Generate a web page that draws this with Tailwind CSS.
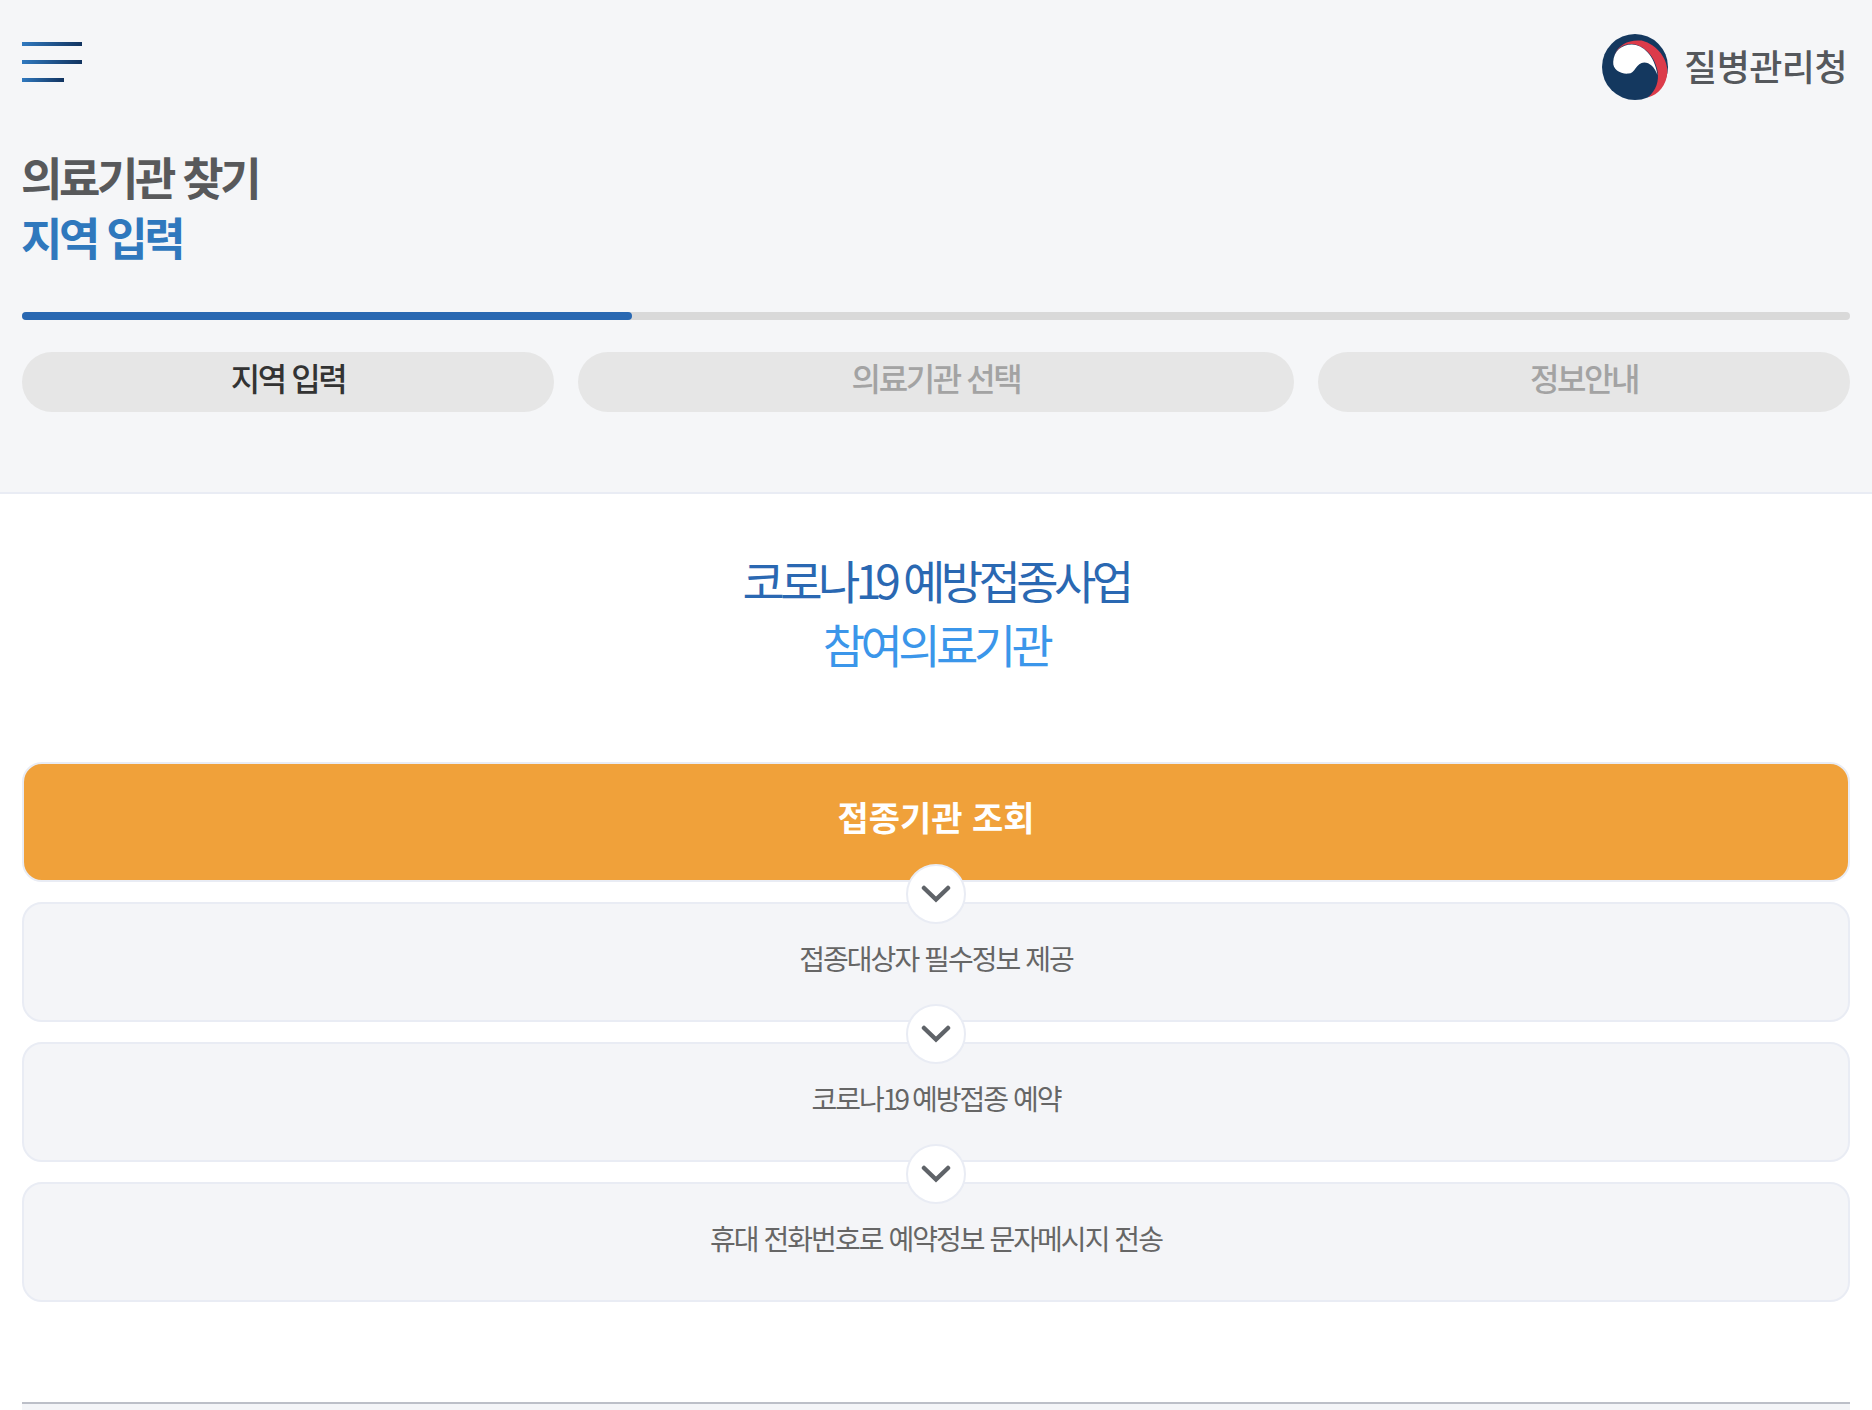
<!DOCTYPE html>
<html lang="ko">
<head>
    <meta charset="UTF-8">
    <meta name="viewport" content="width=device-width, initial-scale=1.0">
    <title>의료기관 찾기</title>
    <script src="https://cdn.jsdelivr.net/npm/@tailwindcss/browser@4"></script>
</head>
<body class="bg-white font-['Noto_Sans_CJK_KR','Noto_Sans',sans-serif] overflow-hidden">
    <!--상단-->
    <header class="bg-[#f5f6f8] border-b-2 border-[#e9ecf4] h-[494px] px-[22px]">
        <div class="flex justify-between h-[147px]">
            <button class="flex flex-col gap-[14px] pt-[42px] h-fit">
                <span class="block w-[60px] h-1 bg-gradient-to-r from-[#3079bf] to-[#123460]"></span>
                <span class="block w-[60px] h-1 bg-gradient-to-r from-[#3079bf] to-[#123460]"></span>
                <span class="block w-[42px] h-1 bg-gradient-to-r from-[#3079bf] to-[#123460]"></span>
            </button>
            <div class="flex items-center gap-4 h-fit pt-[34px] pr-[3px]">
                <svg class="w-[66px] h-[66px]" viewBox="0 0 100 100">
                    <circle cx="50" cy="50" r="50" fill="#14385f"/>
                    <path d="M18 33C25 15 42 8 60 10 85 16 100 40 99 58 98 78 85 92 70 96 82 85 87 72 84 55 80 33 62 14 42 15 30 16 22 24 18 33Z" fill="#dc3b4a"/>
                    <path d="M17 42C18 26 30 16 45 16 62 16 80 33 84 62 80 50 72 43 64 43 52 43 50 60 40 60 28 61 16 54 17 42Z" fill="#fff"/>
                </svg>
                <span class="text-[36px] leading-none font-medium text-[#55585c] tracking-[-0.015em] pb-1">질병관리청</span>
            </div>
        </div>
        <h1 class="text-[45px] leading-[60px] font-bold tracking-[-0.075em] text-[#58595b] h-[60px] -ml-px">의료기관 찾기</h1>
        <h2 class="text-[45px] leading-[60px] font-bold tracking-[-0.075em] text-[#2f78bd] h-[60px] -ml-px">지역 입력</h2>

        <div class="mt-[45px] h-2 rounded-full bg-[#d9d9d9]">
            <div class="h-2 w-[610px] rounded-full bg-[#2968b2]"></div>
        </div>

        <ul class="grid grid-cols-[532px_1fr_532px] gap-6 mt-8 text-[32px] font-medium tracking-[-0.075em]">
            <li class="h-[60px] rounded-full bg-[#e6e6e6] flex items-center justify-center pb-[10px] text-[#333]">지역 입력</li>
            <li class="h-[60px] rounded-full bg-[#e6e6e6] flex items-center justify-center pb-[10px] text-[#a3a3a3]">의료기관 선택</li>
            <li class="h-[60px] rounded-full bg-[#e6e6e6] flex items-center justify-center pb-[10px] text-[#a3a3a3]">정보안내</li>
        </ul>
    </header>

    <main class="px-[22px]">
        <div class="text-center pt-[53px] text-[46px] leading-[64px] tracking-[-0.1em]">
            <p class="text-[#2a68b2]">코로나<span class="tracking-[-0.13em]">19</span> 예방접종사업</p>
            <p class="text-[#3b96ea]">참여의료기관</p>
        </div>

        <!--단계-->
        <div class="flex flex-col gap-5 mt-[87px]">
            <div class="relative h-[120px] rounded-[20px] border-2 border-[#e9ecf4] bg-[#f0a13a] flex items-center justify-center pb-[11px] text-[34px] font-bold text-white">
                접종기관 조회
                <span class="absolute left-1/2 -translate-x-1/2 -bottom-[44px] w-[60px] h-[60px] rounded-full bg-white border-2 border-[#e9ecf4] flex items-center justify-center z-10">
                    <svg class="w-[30px] h-[18px]" viewBox="0 0 30 18" fill="none" stroke="#5f6368" stroke-width="4.5" stroke-linecap="round"><path d="M3 3 15 14.5 27 3"/></svg>
                </span>
            </div>
            <div class="relative h-[120px] rounded-[20px] border-2 border-[#e9ecf4] bg-[#f4f5f8] flex items-center justify-center pb-[9px] text-[28px] text-[#666] tracking-[-0.07em]">
                접종대상자 필수정보 제공
                <span class="absolute left-1/2 -translate-x-1/2 -bottom-[44px] w-[60px] h-[60px] rounded-full bg-white border-2 border-[#e9ecf4] flex items-center justify-center z-10">
                    <svg class="w-[30px] h-[18px]" viewBox="0 0 30 18" fill="none" stroke="#5f6368" stroke-width="4.5" stroke-linecap="round"><path d="M3 3 15 14.5 27 3"/></svg>
                </span>
            </div>
            <div class="relative h-[120px] rounded-[20px] border-2 border-[#e9ecf4] bg-[#f4f5f8] flex items-center justify-center pb-[9px] text-[28px] text-[#666] tracking-[-0.07em]">
                <span>코로나<span class="tracking-[-0.14em]">19</span> 예방접종 예약</span>
                <span class="absolute left-1/2 -translate-x-1/2 -bottom-[44px] w-[60px] h-[60px] rounded-full bg-white border-2 border-[#e9ecf4] flex items-center justify-center z-10">
                    <svg class="w-[30px] h-[18px]" viewBox="0 0 30 18" fill="none" stroke="#5f6368" stroke-width="4.5" stroke-linecap="round"><path d="M3 3 15 14.5 27 3"/></svg>
                </span>
            </div>
            <div class="h-[120px] rounded-[20px] border-2 border-[#e9ecf4] bg-[#f4f5f8] flex items-center justify-center pb-[9px] text-[28px] text-[#666] tracking-[-0.07em]">
                휴대 전화번호로 예약정보 문자메시지 전송
            </div>
        </div>

        <footer class="mt-[100px] h-[8px] border-t-2 border-[#bcbfc8] bg-[#f4f5f8]"></footer>
    </main>
</body>
</html>
